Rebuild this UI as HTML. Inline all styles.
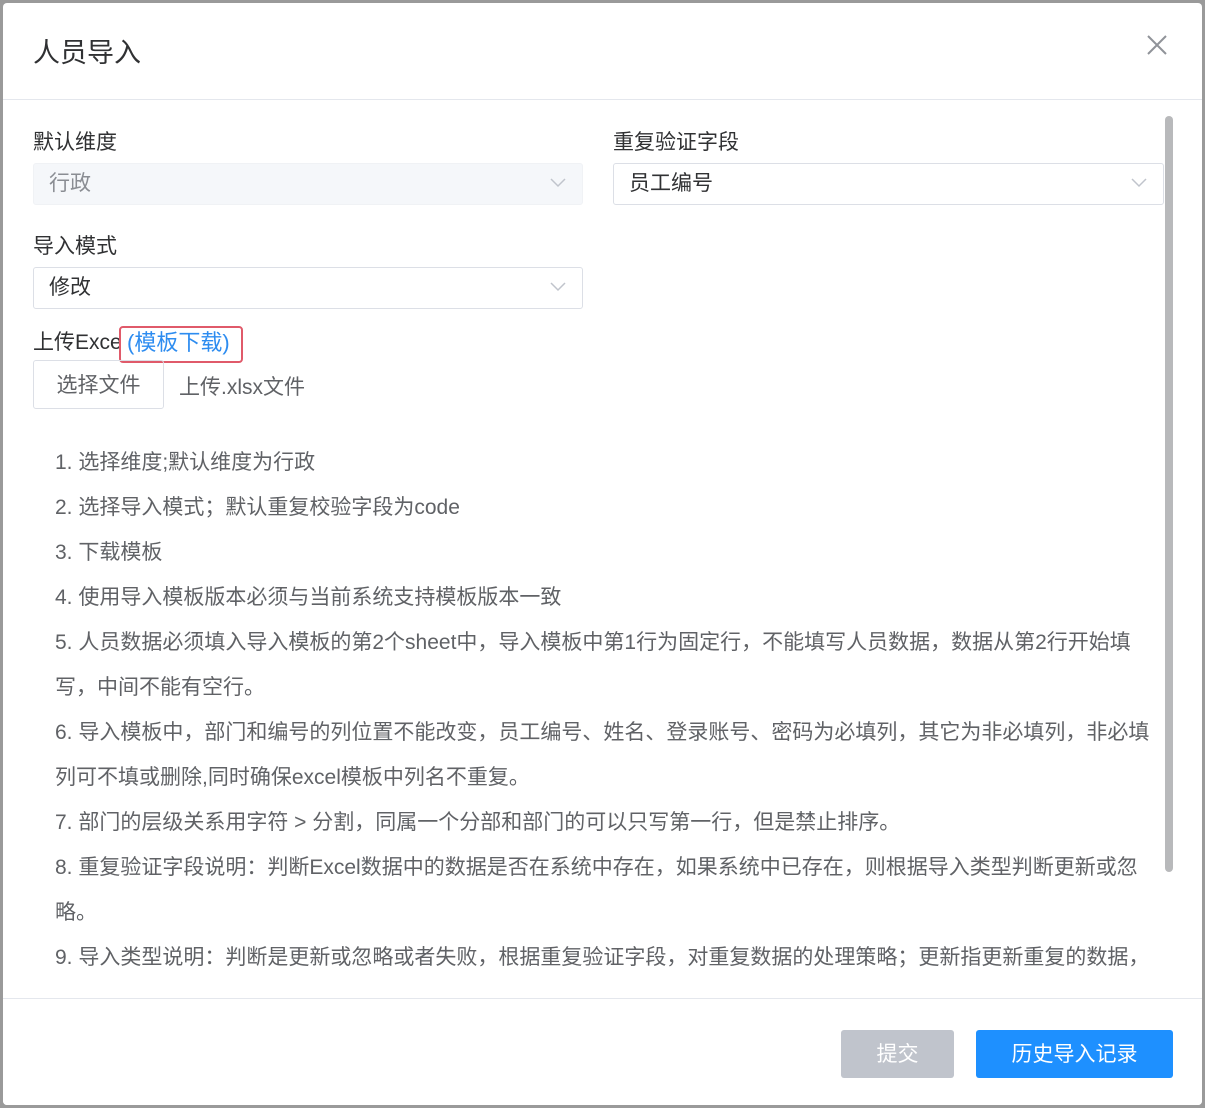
<!DOCTYPE html>
<html><head><meta charset="utf-8"><style>
*{margin:0;padding:0;box-sizing:border-box}
body{width:1205px;height:1108px;background:#9a9a9a;position:relative;overflow:hidden;font-family:"Liberation Sans","Noto Sans CJK SC",sans-serif}
.dlg{position:absolute;left:3px;top:3px;width:1199px;height:1102px;background:#fff;border-radius:4px;overflow:hidden}
.a{position:absolute;white-space:nowrap}
.lbl{font-size:21px;color:#303133}
.sel{position:absolute;height:42px;border:1px solid #dcdfe6;border-radius:3px;font-size:21px;color:#303133;padding-left:15px;line-height:40px}
.sel svg{position:absolute;right:16px;top:14px}
.ln{position:absolute;left:52px;font-size:21px;color:#606266;white-space:nowrap}
.btn{position:absolute;height:48px;border-radius:3px;color:#fff;font-size:21px;text-align:center;line-height:50px}
</style></head><body>
<div class="dlg">
<div class="a" style="left:30px;top:28px;font-size:27px;color:#303133">人员导入</div>
<svg class="a" style="left:1144px;top:32px" width="20" height="20"><path d="M1 1L19 19M19 1L1 19" stroke="#909399" stroke-width="2"/></svg>
<div class="a" style="left:0;top:96px;width:1199px;height:1px;background:#e4e7ed"></div>
<div class="a lbl" style="left:30px;top:123px">默认维度</div>
<div class="sel" style="left:30px;top:160px;width:550px;background:#f5f7fa;border-color:#f0f2f5;color:#8a8d93">行政<svg width="16" height="10"><path d="M1 1L8 8L15 1" stroke="#c0c4cc" stroke-width="1.5" fill="none"/></svg></div>
<div class="a lbl" style="left:610px;top:123px">重复验证字段</div>
<div class="sel" style="left:610px;top:160px;width:551px">员工编号<svg width="16" height="10"><path d="M1 1L8 8L15 1" stroke="#c0c4cc" stroke-width="1.5" fill="none"/></svg></div>
<div class="a lbl" style="left:30px;top:227px">导入模式</div>
<div class="sel" style="left:30px;top:264px;width:550px">修改<svg width="16" height="10"><path d="M1 1L8 8L15 1" stroke="#c0c4cc" stroke-width="1.5" fill="none"/></svg></div>
<div class="a lbl" style="left:30px;top:323px">上传Exce</div>
<div class="a" style="left:116px;top:323px;width:124px;height:37px;border:2px solid #e05a6a;border-radius:4px"></div>
<div class="a" style="left:124px;top:322px;font-size:22px;color:#2d8cf0">(模板下载)</div>
<div class="a" style="left:30px;top:357px;width:131px;height:49px;border:1px solid #dcdfe6;border-radius:3px;font-size:21px;color:#606266;text-align:center;line-height:50px">选择文件</div>
<div class="a" style="left:176px;top:368px;font-size:21px;color:#606266">上传.xlsx文件</div>
<div class="ln" style="top:443px">1. 选择维度;默认维度为行政</div>
<div class="ln" style="top:488px">2. 选择导入模式；默认重复校验字段为code</div>
<div class="ln" style="top:533px">3. 下载模板</div>
<div class="ln" style="top:578px">4. 使用导入模板版本必须与当前系统支持模板版本一致</div>
<div class="ln" style="top:623px">5. 人员数据必须填入导入模板的第2个sheet中，导入模板中第1行为固定行，不能填写人员数据，数据从第2行开始填</div>
<div class="ln" style="top:668px">写，中间不能有空行。</div>
<div class="ln" style="top:713px">6. 导入模板中，部门和编号的列位置不能改变，员工编号、姓名、登录账号、密码为必填列，其它为非必填列，非必填</div>
<div class="ln" style="top:758px">列可不填或删除,同时确保excel模板中列名不重复。</div>
<div class="ln" style="top:803px">7. 部门的层级关系用字符 &gt; 分割，同属一个分部和部门的可以只写第一行，但是禁止排序。</div>
<div class="ln" style="top:848px">8. 重复验证字段说明：判断Excel数据中的数据是否在系统中存在，如果系统中已存在，则根据导入类型判断更新或忽</div>
<div class="ln" style="top:893px">略。</div>
<div class="ln" style="top:938px">9. 导入类型说明：判断是更新或忽略或者失败，根据重复验证字段，对重复数据的处理策略；更新指更新重复的数据，</div>
<div class="a" style="left:1162px;top:113px;width:8px;height:756px;background:#b8b9bb;border-radius:4px"></div>
<div class="a" style="left:0;top:995px;width:1199px;height:1px;background:#e4e7ed;box-shadow:0 -8px 0 #fff"></div>
<div class="a" style="left:0;top:996px;width:1199px;height:106px;background:#fff"></div>
<div class="btn" style="left:838px;top:1027px;width:113px;background:#c0c4cc">提交</div>
<div class="btn" style="left:973px;top:1027px;width:197px;background:#1e90ff">历史导入记录</div>
</div>
</body></html>
